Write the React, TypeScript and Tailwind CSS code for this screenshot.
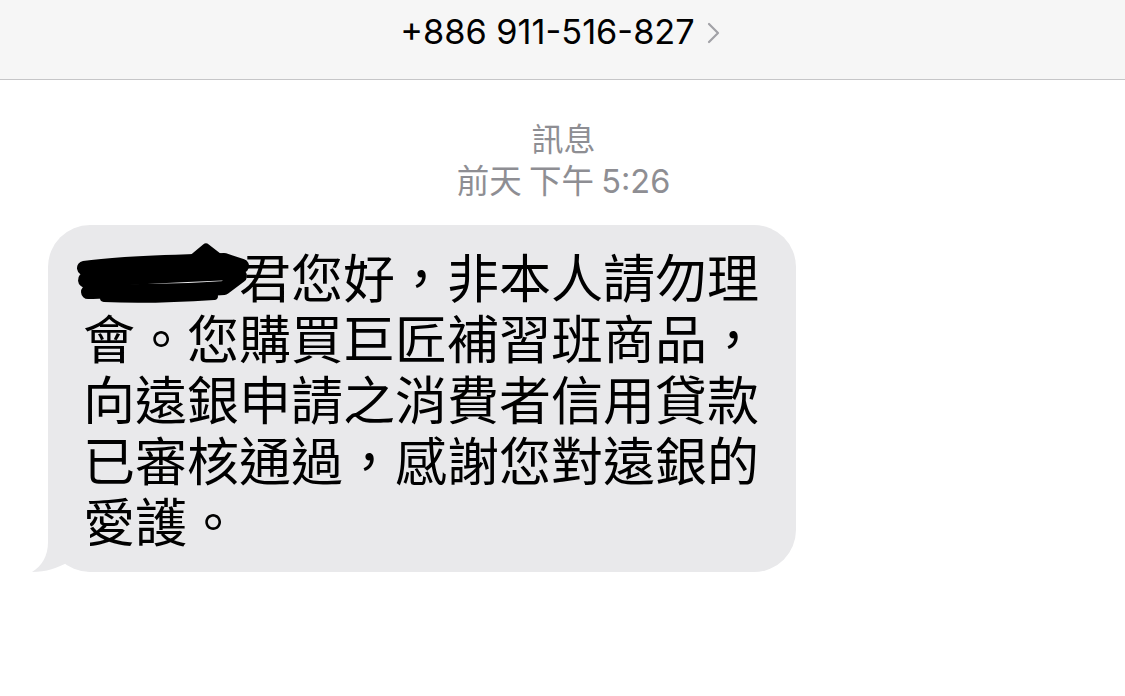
import React from "react";

const cjk = { fontFamily: '"Noto Sans CJK TC", "Noto Sans", sans-serif' };
const ui = { fontFamily: 'Inter, "Noto Sans CJK TC", sans-serif' };

// marker scribble hiding the sender's name
function Scribble() {
  return (
    <span className="relative inline-block w-[3em] h-[1em] align-[-0.12em]">
      <svg
        className="absolute left-[-9px] top-[-12px]"
        width="178"
        height="68"
        viewBox="0 0 178 68"
      >
        <g stroke="#000" strokeLinecap="round" strokeLinejoin="round" fill="none">
          <path d="M10 28 C 50 22, 100 22, 150 20 L 168 26" strokeWidth="14" />
          <path d="M12 40 C 60 36, 110 34, 160 32" strokeWidth="16" />
          <path d="M14 52 C 60 50, 100 52, 150 48 L 166 36" strokeWidth="14" />
          <path d="M120 18 L 132 8 L 150 22" strokeWidth="9" />
          <path d="M30 58 C 70 60, 110 58, 140 56" strokeWidth="8" />
        </g>
      </svg>
    </span>
  );
}

export default function App() {
  return (
    <div className="w-[1125px] h-[696px] bg-white overflow-hidden" style={ui}>
      {/* Nav bar */}
      <div className="h-[80px] bg-[#f6f6f6] border-b border-[#c6c6c8] flex items-start justify-center pt-[11px]">
        <div className="flex items-center gap-[12px] pr-[4px]">
          <span className="text-[34.3px] leading-[42px] text-black">+886 911-516-827</span>
          <svg width="14" height="22" viewBox="0 0 14 22" className="mt-[2px]">
            <path d="M2 2 L11 11 L2 20" stroke="#a2a2a7" strokeWidth="2.2" fill="none" strokeLinecap="round" strokeLinejoin="round" />
          </svg>
        </div>
      </div>

      {/* Timestamp header */}
      <div className="flex flex-col items-center pt-[37px] text-[#8e8e93]" style={cjk}>
        <div className="text-[32px] leading-[41px] pl-[2px]">訊息</div>
        <div className="text-[32.5px] leading-[42px] pl-[2px]">
          前天 下午 <span style={ui}>5:26</span>
        </div>
      </div>

      {/* Incoming bubble */}
      <div className="relative mt-[22px] ml-[48px] w-[748px]">
        <div
          className="relative bg-[#e9e9eb] rounded-[42px] pl-[35px] pr-[36px] pt-[20px] pb-[22px] text-[52px] leading-[61px] text-black"
          style={cjk}
        >
          <Scribble />君您好，非本人請勿理會。您購買巨匠補習班商品，向遠銀申請之消費者信用貸款已審核通過，感謝您對遠銀的愛護。
        </div>
        <svg
          className="absolute left-[-18px] bottom-0"
          width="60"
          height="50"
          viewBox="0 0 60 50"
        >
          <path
            d="M18 0 L18 20 C18 34, 12 44, 2 50 C 16 50, 28 46, 38 40 C 44 44, 52 48, 60 50 L60 0 Z"
            fill="#e9e9eb"
          />
        </svg>
      </div>
    </div>
  );
}
